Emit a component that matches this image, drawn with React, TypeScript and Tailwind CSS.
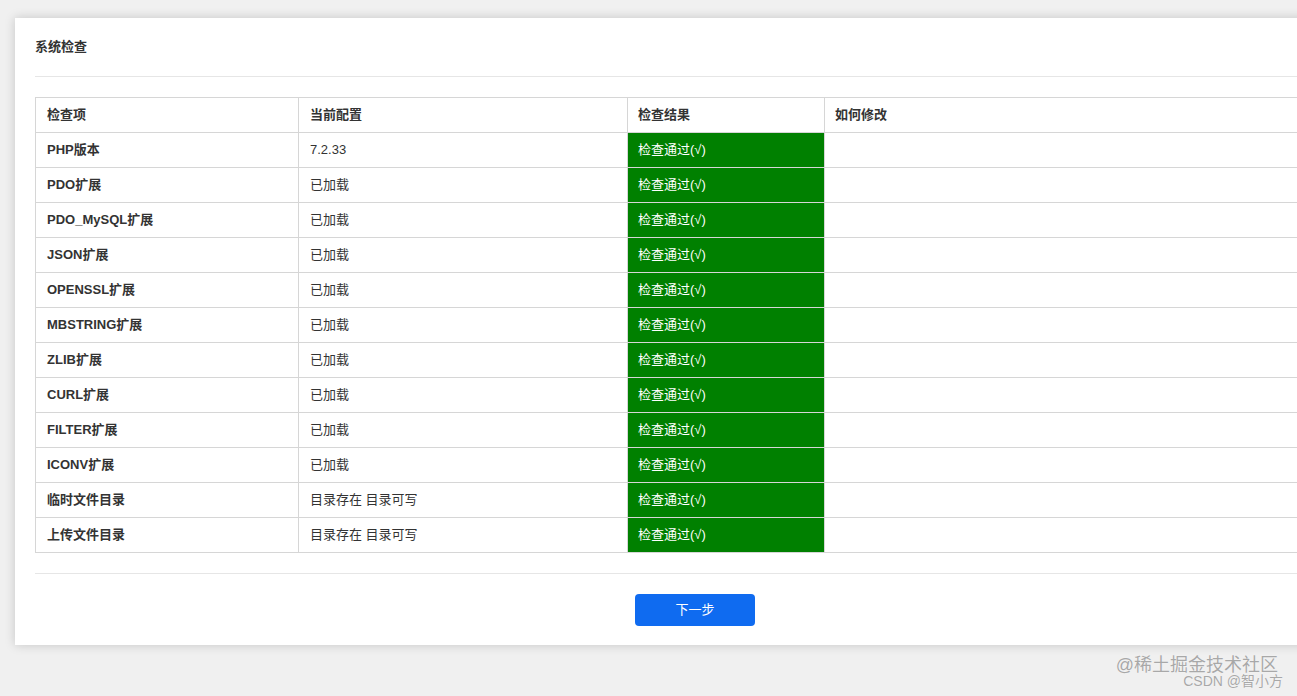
import React from "react";

const rows: [string, string][] = [
  ["PHP版本", "7.2.33"],
  ["PDO扩展", "已加载"],
  ["PDO_MySQL扩展", "已加载"],
  ["JSON扩展", "已加载"],
  ["OPENSSL扩展", "已加载"],
  ["MBSTRING扩展", "已加载"],
  ["ZLIB扩展", "已加载"],
  ["CURL扩展", "已加载"],
  ["FILTER扩展", "已加载"],
  ["ICONV扩展", "已加载"],
  ["临时文件目录", "目录存在 目录可写"],
  ["上传文件目录", "目录存在 目录可写"],
];

export default function App() {
  return (
    <div
      className="relative w-[1297px] h-[696px] overflow-hidden bg-[#f0f0f0] text-[13px] text-[#333]"
      style={{ fontFamily: '"Liberation Sans", "Noto Sans CJK SC", sans-serif' }}
    >
      <div className="ml-[15px] mt-[18px] w-[1360px] bg-white px-5 pb-[19px] shadow-[0_0_10px_rgba(0,0,0,0.18)]">
        <div className="h-[59px] flex items-center border-b border-[#e6e6e6] font-semibold text-[13px]">
          系统检查
        </div>
        <table className="mt-[20px] w-full border-collapse table-fixed">
          <colgroup>
            <col className="w-[263px]" />
            <col className="w-[329px]" />
            <col className="w-[197px]" />
            <col />
          </colgroup>
          <thead>
            <tr className="h-[35px]">
              <th className="border border-[#d6d6d6] px-[11px] text-left font-semibold">检查项</th>
              <th className="border border-[#d6d6d6] px-[11px] text-left font-semibold">当前配置</th>
              <th className="border border-[#d6d6d6] px-[10px] text-left font-semibold">检查结果</th>
              <th className="border border-[#d6d6d6] px-[10px] text-left font-semibold">如何修改</th>
            </tr>
          </thead>
          <tbody>
            {rows.map(([a, b]) => (
              <tr key={a} className="h-[35px]">
                <td className="border border-[#d6d6d6] px-[11px] font-semibold">{a}</td>
                <td className="border border-[#d6d6d6] px-[11px]">{b}</td>
                <td className="border border-[#d6d6d6] bg-[#008000] px-[10px] text-white">检查通过(√)</td>
                <td className="border border-[#d6d6d6] px-[10px]"></td>
              </tr>
            ))}
          </tbody>
        </table>
        <div className="mt-[20px] border-t border-[#e6e6e6]" />
        <div className="mt-[20px] flex justify-center">
          <button className="h-[32px] w-[120px] rounded-[4px] bg-[#0f6bf0] text-[13px] text-white">
            下一步
          </button>
        </div>
      </div>
      <div
        className="absolute right-[19px] top-[656px] text-right text-[#a8a8a8]"
        style={{ textShadow: "0 0 1px #fff" }}
      >
        <div className="text-[18px] leading-[18px]">@稀土掘金技术社区</div>
        <div className="text-[14px] leading-[14px] mr-[-5px]">CSDN @智小方</div>
      </div>
    </div>
  );
}
